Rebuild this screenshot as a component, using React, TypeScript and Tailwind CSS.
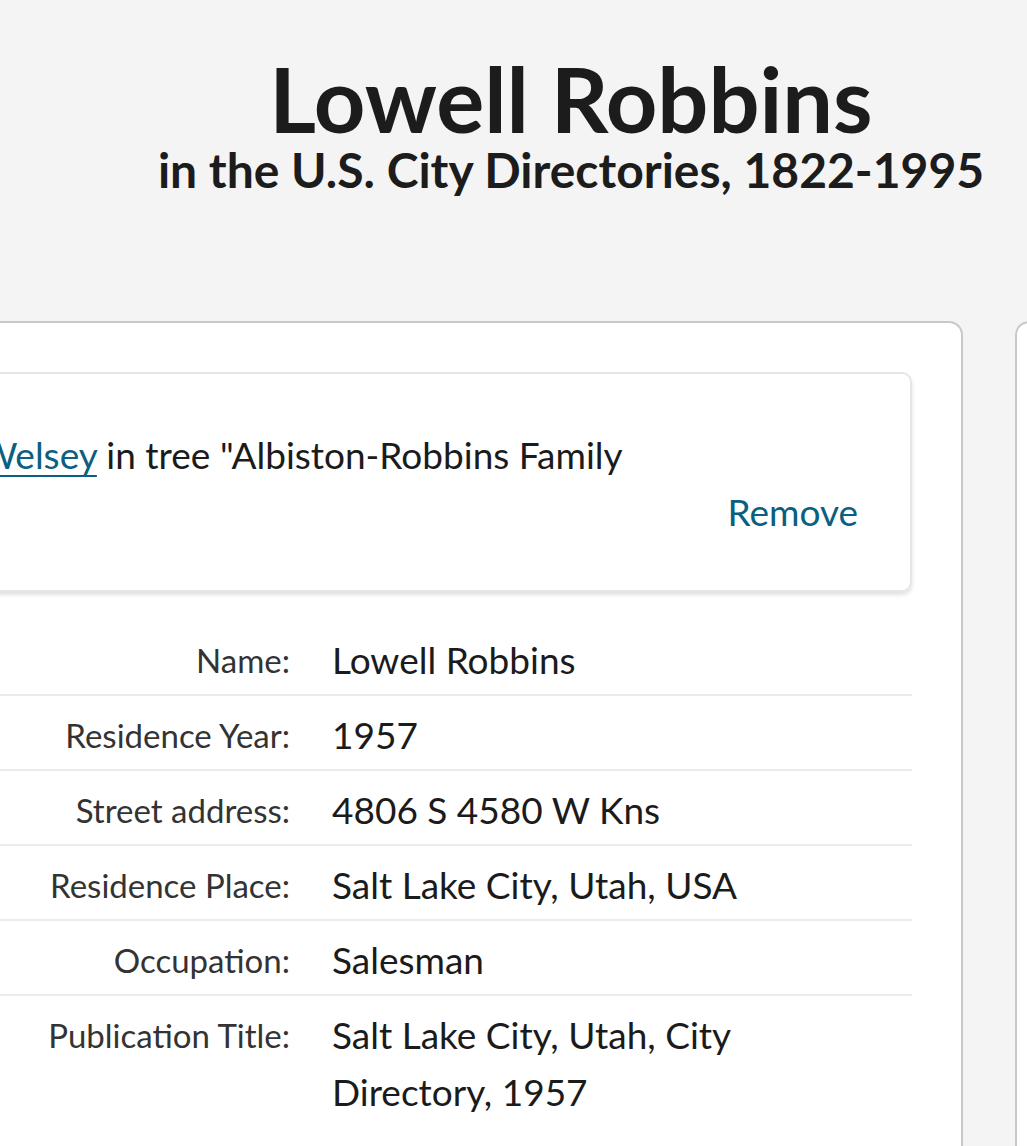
import { Fragment } from "react"

const FIELDS = [
  { label: "Name:", value: "Lowell Robbins" },
  { label: "Residence Year:", value: "1957" },
  { label: "Street address:", value: "4806 S 4580 W Kns" },
  { label: "Residence Place:", value: "Salt Lake City, Utah, USA" },
  { label: "Occupation:", value: "Salesman" },
  { label: "Publication Title:", value: "Salt Lake City, Utah, City Directory, 1957" },
]

export default function App() {
  return (
    <div className="min-h-screen overflow-hidden bg-[#f4f4f4] font-['Lato',sans-serif] text-[#1b1b1b]">
      <div className="-ml-[200px] w-[1542px]">
        <header className="pt-[53px] text-center text-[#1c1c1c]">
          <h1 className="text-[90px] font-bold leading-[90px]">Lowell Robbins</h1>
          <p className="text-[48px] font-bold leading-[54px]">in the U.S. City Directories, 1822-1995</p>
        </header>

        <div className="mt-[124px] flex gap-[52px]">
          <section className="w-[1163px] rounded-t-[14px] border-2 border-b-0 border-[#c8c8c8] bg-white px-[49px] pt-[49px]">
            <div className="mb-[29px] flex items-end justify-between rounded-[10px] border-2 border-[#e6e6e6] pb-[50px] pl-[13px] pr-[52px] pt-[52px] shadow-[0_3px_4px_rgba(0,0,0,0.12)]">
              <p className="w-[840px] text-[37px] leading-[57px]">
                <a href="#" className="text-[#0b5f80] underline decoration-2 underline-offset-[6px]">
                  Lowell Welsey
                </a>{" "}
                in tree "Albiston-Robbins Family Tree"
              </p>
              <button type="button" className="text-[37px] leading-[57px] text-[#0b5f80]">
                Remove
              </button>
            </div>

            <dl className="grid grid-cols-[481px_1fr]">
              {FIELDS.map((field, i) => {
                const divider = i < FIELDS.length - 1 ? "border-b-2 border-[#ebebeb]" : ""
                return (
                  <Fragment key={field.label}>
                    <dt className={`pb-[5px] pr-[42px] pt-[11px] text-right text-[33px] leading-[57px] text-[#333] ${divider}`}>
                      {field.label}
                    </dt>
                    <dd className={`pb-[6px] pt-[10px] text-[37px] leading-[57px] ${divider}`}>
                      <div className="max-w-[520px]">{field.value}</div>
                    </dd>
                  </Fragment>
                )
              })}
            </dl>
          </section>

          <aside className="min-h-[900px] flex-1 rounded-t-[14px] border-2 border-b-0 border-[#c8c8c8] bg-white" />
        </div>
      </div>
    </div>
  )
}
